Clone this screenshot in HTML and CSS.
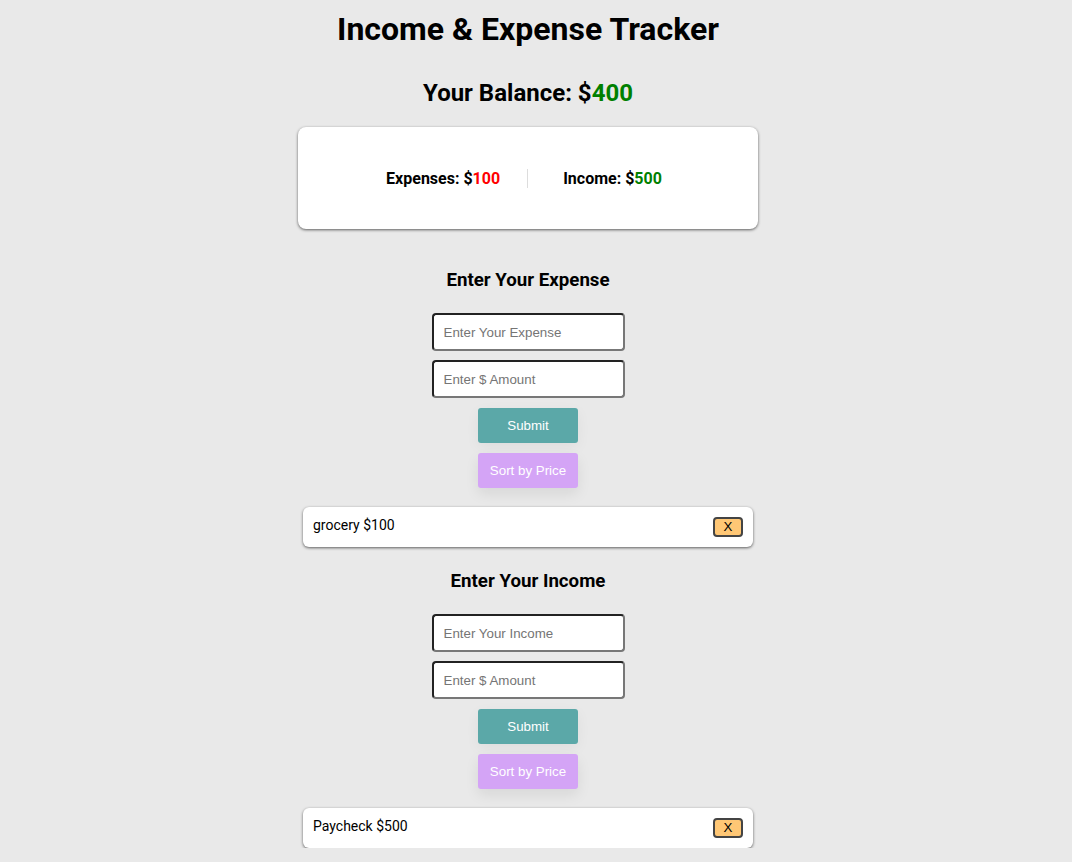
FILE: index.html
```html
<!DOCTYPE html>
<html lang="en">
<head>
<meta charset="utf-8">
<title>Income &amp; Expense Tracker</title>
<link rel="stylesheet" href="styles.css">
</head>
<body>
<div class="app">
  <h1 class="title">Income &amp; Expense Tracker</h1>
  <h2 class="balance">Your Balance: $<span class="green">400</span></h2>
  <div class="summary">
    <div class="stat stat-expense">Expenses: $<span class="red">100</span></div>
    <div class="divider"></div>
    <div class="stat stat-income">Income: $<span class="green">500</span></div>
  </div>

  <section class="section expense-section">
    <h3 class="section-title">Enter Your Expense</h3>
    <form class="entry-form">
      <input class="field" type="text" placeholder="Enter Your Expense">
      <input class="field" type="text" placeholder="Enter $ Amount">
      <button type="button" class="btn submit">Submit</button>
      <button type="button" class="btn sort">Sort by Price</button>
    </form>
    <ul class="items">
      <li class="item"><span class="item-text">grocery $100</span><button type="button" class="remove">X</button></li>
    </ul>
  </section>

  <section class="section income-section">
    <h3 class="section-title">Enter Your Income</h3>
    <form class="entry-form">
      <input class="field" type="text" placeholder="Enter Your Income">
      <input class="field" type="text" placeholder="Enter $ Amount">
      <button type="button" class="btn submit">Submit</button>
      <button type="button" class="btn sort">Sort by Price</button>
    </form>
    <ul class="items">
      <li class="item"><span class="item-text">Paycheck $500</span><button type="button" class="remove">X</button></li>
    </ul>
  </section>
</div>
</body>
</html>
```

FILE: styles.css
```css
html, body {
  margin: 0;
  padding: 0;
  background: #e9e9e9;
}
body {
  font-family: Roboto, "Liberation Sans", sans-serif;
  color: #000;
}
.app {
  display: flex;
  flex-direction: column;
  align-items: center;
  padding: 10px 16px 0 0;
}
.title {
  font-size: 32px;
  font-weight: 700;
  margin: 0;
  line-height: 38px;
}
.balance {
  font-size: 24px;
  font-weight: 700;
  margin: 31px 0 0;
  line-height: 28px;
}
.green { color: #008000; }
.red { color: #ff0000; }
.summary {
  margin-top: 20px;
  width: 460px;
  height: 102px;
  box-sizing: border-box;
  padding-right: 8px;
  background: #fff;
  border-radius: 8px;
  box-shadow: 0 1px 3px rgba(0,0,0,0.6);
  display: flex;
  align-items: center;
  justify-content: center;
}
.stat {
  font-size: 16px;
  font-weight: 700;
}
.stat-expense { padding-right: 27px; }
.stat-income { padding-left: 35px; }
.divider {
  width: 1px;
  height: 19px;
  background: #ddd;
}
.section {
  display: flex;
  flex-direction: column;
  align-items: center;
  width: 100%;
}
.section-title {
  font-size: 18.7px;
  font-weight: 700;
  margin: 0;
  line-height: 22px;
}
.expense-section { margin-top: 40px; }
.income-section { margin-top: 23px; }
.entry-form {
  display: flex;
  flex-direction: column;
  align-items: center;
  gap: 9px;
  margin-top: 22px;
}
.field {
  width: 193px;
  height: 38px;
  box-sizing: border-box;
  border: 2px solid #222;
  border-bottom-color: #777;
  border-right-color: #777;
  border-radius: 4px;
  padding: 0 10px;
  font-family: "Liberation Sans", Arial, sans-serif;
  font-size: 13.33px;
  background: #fff;
}
.field::placeholder { color: #757575; }
.btn {
  width: 100px;
  height: 35px;
  border: none;
  border-radius: 3px;
  color: #fff;
  font-family: "Liberation Sans", Arial, sans-serif;
  font-size: 13.33px;
  font-weight: 400;
}
.submit {
  background: #5ba8a8;
  margin-top: 1px;
  box-shadow: 0 4px 14px rgba(0,0,0,0.05);
}
.sort {
  background: #d4a4f6;
  margin-top: 1px;
  box-shadow: 0 6px 14px rgba(0,0,0,0.08);
}
.items {
  list-style: none;
  margin: 19px 0 0;
  padding: 0;
}
.item {
  width: 450px;
  height: 40px;
  box-sizing: border-box;
  background: #fff;
  border-radius: 6px;
  box-shadow: 0 1px 3px rgba(0,0,0,0.6);
  display: flex;
  align-items: flex-start;
  justify-content: space-between;
  padding: 9px 10px 0 10px;
}
.item-text {
  font-size: 14px;
  line-height: 18px;
}
.remove {
  margin-top: 1px;
  width: 30px;
  height: 20px;
  box-sizing: border-box;
  background: #ffc775;
  border: 2px solid #444;
  border-radius: 4px;
  font-family: "Liberation Sans", Arial, sans-serif;
  font-size: 13.33px;
  line-height: 14px;
  padding: 0;
  color: #000;
}
```
